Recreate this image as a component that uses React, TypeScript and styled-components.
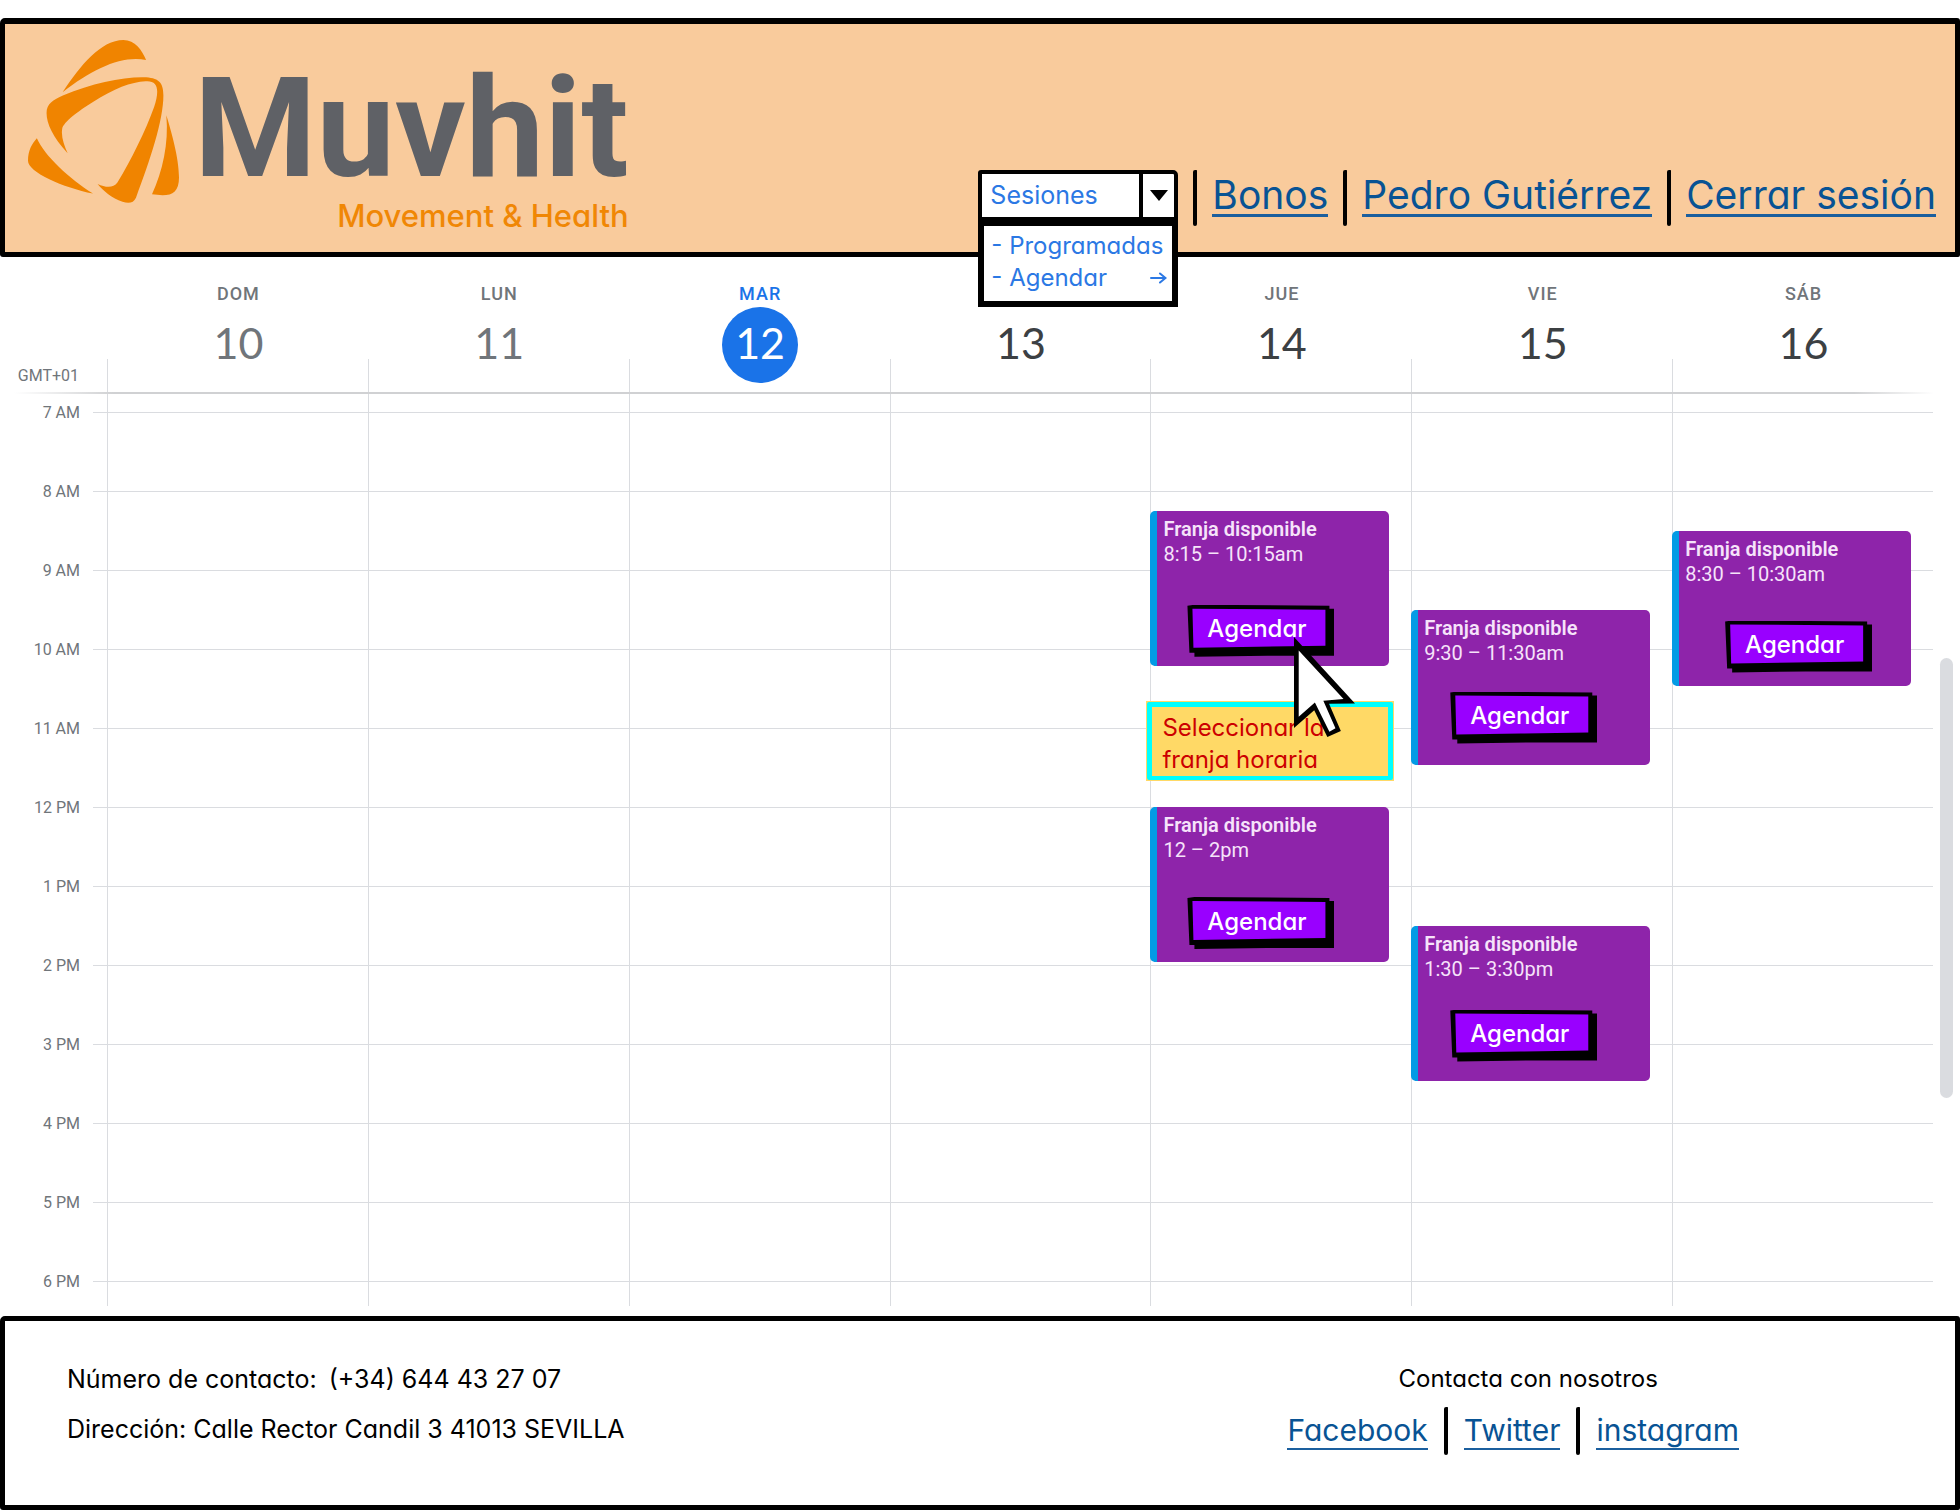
import React from 'react';
import styled, { createGlobalStyle } from 'styled-components';

const HOUR = 79;
const FIRST_HOUR = 7;
const sketch = `Inter, 'Open Sans', sans-serif`;
const ui = `Roboto, 'Noto Sans', sans-serif`;

const GlobalStyle = createGlobalStyle`
  *, *::before, *::after { box-sizing: border-box; }
  body {
    margin: 0;
    background: #fff;
    color: #000;
    font-family: ${sketch};
    font-feature-settings: 'cv11' 1;
  }
  h1, p, ul { margin: 0; padding: 0; font-weight: 400; }
  ul { list-style: none; }
`;

const Page = styled.div`
  display: flex;
  flex-direction: column;
  padding-top: 18px;
`;

const Header = styled.header`
  display: flex;
  justify-content: space-between;
  align-items: flex-end;
  padding: 16px 19px 16px 23px;
  background: #f9cb9c;
  border: 5px solid #000;
  border-top-width: 6px;
  border-radius: 5px 3px 2px 3px;
`;

const Logo = styled.div`
  display: flex;
  align-items: flex-start;
  gap: 15px;
`;

const LogoMark = styled.svg`
  width: 151px;
  height: 163px;
`;

const Wordmark = styled.h1`
  display: flex;
  flex-direction: column;
  align-items: flex-end;
`;

const BrandName = styled.span`
  padding-top: 20px;
  font-family: Roboto, sans-serif;
  font-weight: 700;
  font-size: 140px;
  line-height: 136px;
  color: #5f6166;
`;

const BrandTag = styled.span`
  font-size: 31px;
  font-weight: 500;
  line-height: 40px;
  color: #f08705;
`;

const Nav = styled.nav`
  display: flex;
  align-items: center;
  gap: 16px;
`;

const Divider = styled.span<{ $tall?: boolean }>`
  width: 4px;
  height: ${(p) => (p.$tall ? 56 : 48)}px;
  background: #000;
  border-radius: 3px 1px 3px 3px;
`;

const Link = styled.a<{ $large?: boolean }>`
  margin-bottom: ${(p) => (p.$large ? 4 : 0)}px;
  font-size: ${(p) => (p.$large ? 39 : 30)}px;
  line-height: ${(p) => (p.$large ? 38 : 36)}px;
  color: #085394;
  text-decoration: none;
  border-bottom: ${(p) => (p.$large ? 3 : 2)}px solid #1b5f9e;
`;

const TopNav = styled(Nav)`
  gap: 15px;
  padding-bottom: 10px;
`;

const SelectWrap = styled.div`
  position: relative;
  width: 200px;
  margin-bottom: 5px;
`;

const SelectBox = styled.label`
  display: flex;
  height: 51px;
  background: #fff;
  border: 4px solid #000;
  border-radius: 3px 5px 0 0;
`;

const Select = styled.select`
  flex: 1;
  min-width: 0;
  appearance: none;
  border: 0;
  padding: 0 0 2px 8px;
  background: transparent;
  font-family: ${sketch};
  font-feature-settings: inherit;
  font-size: 25px;
  color: #2b78e4;
`;

const SelectArrow = styled.span`
  display: flex;
  align-items: center;
  justify-content: center;
  width: 35px;
  border-left: 4px solid #000;
`;

const Menu = styled.ul`
  position: absolute;
  z-index: 5;
  top: 50px;
  left: 0;
  width: 200px;
  height: 87px;
  padding: 4px 5px 0 7px;
  background: #fff;
  border: 6px solid #000;
`;

const MenuItem = styled.li`
  display: flex;
  align-items: center;
  justify-content: space-between;
`;

const MenuLink = styled.a`
  font-size: 24px;
  line-height: 32px;
  white-space: nowrap;
  color: #2b78e4;
  text-decoration: none;
`;

const Calendar = styled.main`
  display: grid;
  grid-template-columns: 107px 1fr 27px;
  grid-template-rows: auto auto;
`;

const Zone = styled.div`
  align-self: end;
  padding: 0 28px 7px 0;
  text-align: right;
  font: 400 16px/18px ${ui};
  color: #70757a;
`;

const Week = styled.div`
  display: grid;
  grid-template-columns: repeat(7, 1fr);
`;

const DayHead = styled.div`
  position: relative;
  display: flex;
  flex-direction: column;
  align-items: center;
  gap: 2px;
  padding: 26px 0 9px 2px;
  &::before {
    content: '';
    position: absolute;
    left: 0;
    bottom: 0;
    width: 1px;
    height: 33px;
    background: #dadce0;
  }
`;

const Weekday = styled.span<{ $today?: boolean }>`
  height: 22px;
  font: 500 18px/22px ${ui};
  letter-spacing: 1px;
  color: ${(p) => (p.$today ? '#1a73e8' : '#70757a')};
`;

const DayNumber = styled.span<{ $tone: string }>`
  display: flex;
  align-items: center;
  justify-content: center;
  width: 76px;
  height: 76px;
  padding-bottom: 4px;
  border-radius: 50%;
  font-family: Lato, sans-serif;
  font-size: 43px;
  line-height: 72px;
  color: ${(p) => (p.$tone === 'today' ? '#fff' : p.$tone === 'past' ? '#70757a' : '#3c4043')};
  background: ${(p) => (p.$tone === 'today' ? '#1a73e8' : 'transparent')};
`;

const HeadRule = styled.div`
  grid-column: 1 / -1;
  height: 2px;
  margin: 0 26px 0 14px;
  background: linear-gradient(90deg, transparent, #d0d1d3 100px, #d0d1d3 calc(100% - 80px), transparent);
`;

const Hours = styled.div`
  padding-top: 10px;
`;

const HourLabel = styled.div`
  display: flex;
  align-items: center;
  justify-content: flex-end;
  gap: 13px;
  height: 17px;
  margin-bottom: ${HOUR - 17}px;
  font: 400 16px/17px ${ui};
  color: #70757a;
  &:last-child { margin-bottom: 0; }
  &::after {
    content: '';
    width: 14px;
    height: 1px;
    background: #dadce0;
  }
`;

const DayColumn = styled.div`
  position: relative;
  display: grid;
  grid-template-rows: 18px repeat(44, calc(${HOUR}px / 4)) 25px;
  border-left: 1px solid #dadce0;
  background: repeating-linear-gradient(#dadce0 0 1px, transparent 1px ${HOUR}px) 0 18px / 100% 900px no-repeat;
`;

const Event = styled.article<{ $row: number; $span: number }>`
  grid-column: 1;
  grid-row: ${(p) => p.$row} / span ${(p) => p.$span};
  margin: 0 22px 3px -1px;
  padding: 6px 0 0 6px;
  border-left: 7px solid #039be5;
  border-radius: 5px;
  background: #8e24aa;
  font-family: ${ui};
  font-size: 20px;
  line-height: 25px;
  color: #f6e3fa;
`;

const EventTitle = styled.p`
  font-weight: 600;
`;

const BookButton = styled.button<{ $gap: number; $indent: number }>`
  position: relative;
  isolation: isolate;
  display: block;
  width: 147px;
  height: 52px;
  margin: ${(p) => p.$gap}px 0 0 ${(p) => p.$indent}px;
  padding: 0 8px 4px 0;
  border: 0;
  background: none;
  font-family: ${sketch};
  font-feature-settings: inherit;
  font-size: 24px;
  font-weight: 500;
  color: #fff;
  cursor: pointer;
  &::before, &::after {
    content: '';
    position: absolute;
    inset: 0;
    z-index: -1;
  }
  &::before {
    background: #000;
    clip-path: polygon(0 1px, 7px 0, 142px 1px, 142px 4px, 147px 4px, 147px 51px, 80px 51px, 7px 52px, 7px 48px, 2px 48px);
  }
  &::after {
    background: #9900ff;
    clip-path: polygon(5px 4px, 138px 5px, 138px 41px, 70px 42px, 6px 43px);
  }
`;

const Hint = styled.div`
  position: absolute;
  z-index: 2;
  top: 307px;
  left: -5px;
  width: 248px;
  padding: 1px;
  background: #ffd966;
`;

const HintText = styled.p`
  padding: 5px 10px 0;
  border: 5px solid #00ffff;
  border-bottom-width: 4px;
  border-radius: 2px;
  font-size: 24px;
  line-height: 32px;
  color: #cc0000;
`;

const Pointer = styled.svg`
  position: absolute;
  z-index: 3;
  top: 243px;
  left: 143px;
  width: 61px;
  height: 100px;
  pointer-events: none;
`;

const Thumb = styled.div`
  width: 13px;
  height: 440px;
  margin: 264px auto 0;
  border-radius: 7px;
  background: #dadce0;
`;

const Footer = styled.footer`
  display: grid;
  grid-template-columns: 1fr auto;
  margin-top: 10px;
  padding: 36px 216px 50px 62px;
  border: 5px solid #000;
  border-radius: 5px 3px 2px 3px;
  font-size: 24px;
`;

const Address = styled.address`
  font-style: normal;
  font-size: 25px;
  line-height: 50px;
  margin-top: -3px;
`;

const Phone = styled.span`
  margin-left: 12px;
`;

const Social = styled.section`
  display: flex;
  flex-direction: column;
  align-items: center;
  gap: 6px;
`;

const SocialTitle = styled.p`
  padding-left: 30px;
  line-height: 44px;
`;

const weekdays = [
  { name: 'DOM', day: 10, tone: 'past' },
  { name: 'LUN', day: 11, tone: 'past' },
  { name: 'MAR', day: 12, tone: 'today' },
  { name: '', day: 13, tone: 'future' },
  { name: 'JUE', day: 14, tone: 'future' },
  { name: 'VIE', day: 15, tone: 'future' },
  { name: 'SÁB', day: 16, tone: 'future' },
];

const hours = ['7 AM', '8 AM', '9 AM', '10 AM', '11 AM', '12 PM', '1 PM', '2 PM', '3 PM', '4 PM', '5 PM', '6 PM'];

const slots = [
  { day: 14, start: 8.25, end: 10.25, time: '8:15 – 10:15am', gap: 38, indent: 24 },
  { day: 14, start: 12, end: 14, time: '12 – 2pm', gap: 34, indent: 24 },
  { day: 15, start: 9.5, end: 11.5, time: '9:30 – 11:30am', gap: 26, indent: 26 },
  { day: 15, start: 13.5, end: 15.5, time: '1:30 – 3:30pm', gap: 28, indent: 26 },
  { day: 16, start: 8.5, end: 10.5, time: '8:30 – 10:30am', gap: 34, indent: 40 },
];

export default function App() {
  return (
    <>
      <GlobalStyle />
      <Page>
        <Header>
          <Logo>
            <LogoMark viewBox="66 120 358 486" preserveAspectRatio="none" fill="#f08400" aria-hidden="true">
              <path d="M148 276C190 195 240 120 292 120C320 120 336 150 346 180C290 165 220 205 148 276Z" />
              <path d="M160 458C125 410 110 370 110 338C110 310 125 300 150 285C215 250 290 230 340 231C375 232 387 245 387 285C387 360 355 480 322 590C316 606 305 608 290 602C265 592 245 570 231 549C250 560 268 562 278 545C310 480 345 390 365 320C378 270 375 240 345 243C310 245 270 265 220 305C185 332 150 365 147 385C144 410 152 435 160 458Z" />
              <path d="M87 413C105 465 165 535 220 578C150 560 66 515 66 480C66 450 75 430 87 413Z" />
              <path d="M394 344C405 390 424 470 424 530C424 570 410 583 385 583L360 580C385 510 400 430 394 344Z" />
            </LogoMark>
            <Wordmark>
              <BrandName>Muvhit</BrandName>
              <BrandTag>Movement &amp; Health</BrandTag>
            </Wordmark>
          </Logo>
          <TopNav>
            <SelectWrap>
              <SelectBox>
                <Select aria-label="Sesiones" defaultValue="Sesiones">
                  <option>Sesiones</option>
                </Select>
                <SelectArrow>
                  <svg width="18" height="11" viewBox="0 0 18 11" aria-hidden="true">
                    <path d="M0 0L18 0L9 11Z" />
                  </svg>
                </SelectArrow>
              </SelectBox>
              <Menu>
                <MenuItem>
                  <MenuLink href="#programadas">- Programadas</MenuLink>
                </MenuItem>
                <MenuItem>
                  <MenuLink href="#agendar">- Agendar</MenuLink>
                  <svg width="17" height="12" viewBox="0 0 17 12" fill="none" stroke="#2b78e4" strokeWidth="2" strokeLinecap="round" aria-hidden="true">
                    <path d="M1 6H15M10 1.500L15.500 6L10 10.500" />
                  </svg>
                </MenuItem>
              </Menu>
            </SelectWrap>
            <Divider $tall />
            <Link $large href="#bonos">Bonos</Link>
            <Divider $tall />
            <Link $large href="#perfil">Pedro Gutiérrez</Link>
            <Divider $tall />
            <Link $large href="#salir">Cerrar sesión</Link>
          </TopNav>
        </Header>

        <Calendar>
          <Zone>GMT+01</Zone>
          <Week>
            {weekdays.map((d) => (
              <DayHead key={d.day}>
                <Weekday $today={d.tone === 'today'}>{d.name}</Weekday>
                <DayNumber $tone={d.tone}>{d.day}</DayNumber>
              </DayHead>
            ))}
          </Week>
          <HeadRule />
          <Hours>
            {hours.map((h) => (
              <HourLabel key={h}>{h}</HourLabel>
            ))}
          </Hours>
          <Week>
            {weekdays.map((d) => (
              <DayColumn key={d.day}>
                {slots
                  .filter((s) => s.day === d.day)
                  .map((s) => (
                    <Event key={s.time} $row={(s.start - FIRST_HOUR) * 4 + 2} $span={(s.end - s.start) * 4}>
                      <EventTitle>Franja disponible</EventTitle>
                      <p>{s.time}</p>
                      <BookButton type="button" $gap={s.gap} $indent={s.indent}>Agendar</BookButton>
                    </Event>
                  ))}
                {d.day === 14 && (
                  <>
                    <Hint role="tooltip">
                      <HintText>Seleccionar la<br />franja horaria</HintText>
                    </Hint>
                    <Pointer viewBox="493 442 181 298" preserveAspectRatio="none" aria-hidden="true">
                      <path d="M493 442V713L553 660L592 740L632 722L597 641L674 640Z" />
                      <path fill="#fff" d="M507 482V680L555 637L598 724L616 714L580 632L640 627Z" />
                    </Pointer>
                  </>
                )}
              </DayColumn>
            ))}
          </Week>
          <Thumb />
        </Calendar>

        <Footer>
          <Address>
            <p>Número de contacto:<Phone>(+34) 644 43 27 07</Phone></p>
            <p>Dirección: Calle Rector Candil 3 41013 SEVILLA</p>
          </Address>
          <Social>
            <SocialTitle>Contacta con nosotros</SocialTitle>
            <Nav aria-label="Redes sociales">
              <Link href="#facebook">Facebook</Link>
              <Divider />
              <Link href="#twitter">Twitter</Link>
              <Divider />
              <Link href="#instagram">instagram</Link>
            </Nav>
          </Social>
        </Footer>
      </Page>
    </>
  );
}
